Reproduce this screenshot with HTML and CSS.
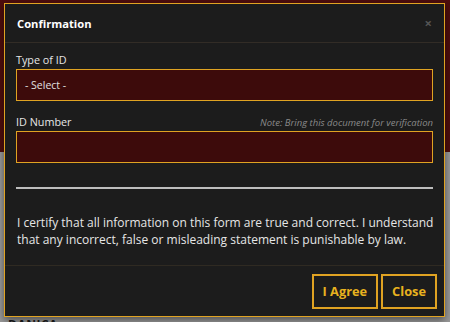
FILE: index.html
```html
<!DOCTYPE html>
<html>
<head>
<meta charset="utf-8">
<link rel="stylesheet" href="styles.css">
</head>
<body>
<div class="page">
  <div class="page-top"></div>
  <div class="page-body"><span class="brand">DANICA</span></div>
</div>
<div class="modal">
  <div class="modal-header">
    <span class="modal-title">Confirmation</span>
    <span class="modal-close">×</span>
  </div>
  <div class="modal-body">
    <div class="field">
      <div class="label-row"><span class="label">Type of ID</span></div>
      <div class="input select">- Select -</div>
    </div>
    <div class="field">
      <div class="label-row"><span class="label">ID Number</span><span class="note">Note: Bring this document for verification</span></div>
      <div class="input"></div>
    </div>
    <hr class="rule">
    <p class="certify">I certify that all information on this form are true and correct. I understand that any incorrect, false or misleading statement is punishable by law.</p>
  </div>
  <div class="modal-footer">
    <button class="btn">I Agree</button>
    <button class="btn">Close</button>
  </div>
</div>
</body>
</html>
```
FILE: styles.css
```css
html, body {
  margin: 0;
  padding: 0;
  width: 450px;
  height: 322px;
  overflow: hidden;
  font-family: "Open Sans", "Noto Sans", sans-serif;
}
.page {
  display: flex;
  flex-direction: column;
  height: 322px;
}
.page-top {
  height: 152px;
  background: #4e0d0d;
}
.page-body {
  flex: 1;
  background: #9a9a9a;
  position: relative;
}
.brand {
  position: absolute;
  left: 8px;
  top: 164px;
  font-weight: 700;
  font-size: 12px;
  color: #1a1a1a;
  letter-spacing: 0.5px;
}
.modal {
  position: absolute;
  left: 4px;
  top: 3px;
  width: 439px;
  height: 312px;
  background: #1c1c1c;
  border: 1px solid #e0a322;
  box-shadow: 0 3px 8px rgba(0,0,0,0.5);
  display: flex;
  flex-direction: column;
  color: #e6e6e6;
}
.modal-header {
  height: 38px;
  flex: none;
  border-bottom: 1px solid #322c26;
  display: flex;
  align-items: center;
  justify-content: space-between;
  padding: 0 12px 0 12px;
}
.modal-title {
  font-weight: 700;
  font-size: 11.2px;
  color: #fff;
}
.modal-close {
  font-size: 13px;
  color: #555;
  font-weight: 700;
}
.modal-body {
  padding: 9px 11px 0 11px;
  flex: 1;
}
.field + .field {
  margin-top: 13px;
}
.label-row {
  display: flex;
  justify-content: space-between;
  align-items: baseline;
  height: 17px;
}
.label {
  font-size: 10.8px;
  color: #e6e6e6;
}
.note {
  font-size: 9.5px;
  font-style: italic;
  color: #8a8a8a;
}
.input {
  height: 30px;
  background: #3d0b0b;
  border: 1px solid #e0a322;
  font-size: 10.5px;
  color: #e0e0e0;
  display: flex;
  align-items: center;
  padding-left: 8px;
}
.rule {
  border: none;
  height: 2px;
  background: #bdbdbd;
  margin: 24px 0 0 0;
}
.certify {
  font-size: 12px;
  line-height: 17px;
  margin: 25px -8px 0 1px;
  color: #e6e6e6;
}
.modal-footer {
  height: 50px;
  flex: none;
  border-top: 1px solid #2f2a22;
  display: flex;
  justify-content: flex-end;
  align-items: center;
  gap: 3px;
  padding-right: 7px;
}
.btn {
  font-family: "Open Sans", "Noto Sans", sans-serif;
  font-weight: 700;
  font-size: 12.8px;
  color: #e8b21f;
  background: #1c1c1c;
  border: 2px solid #e0a322;
  height: 35px;
  padding: 0 9px;
}
```
